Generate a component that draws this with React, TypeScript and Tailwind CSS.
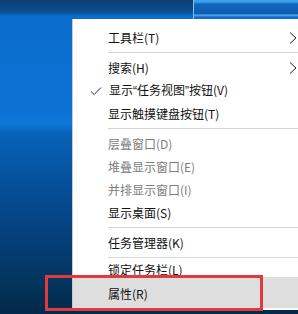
import React from 'react';

type Item =
  | { kind: 'sep' }
  | { kind: 'item'; label: React.ReactNode; disabled?: boolean; checked?: boolean; submenu?: boolean };

const q = (c: string) => <span className="font-['Liberation_Sans',sans-serif]">{c}</span>;

const items: Item[] = [
  { kind: 'item', label: '工具栏(T)', submenu: true },
  { kind: 'sep' },
  { kind: 'item', label: '搜索(H)', submenu: true },
  {
    kind: 'item',
    label: (
      <>
        显示{q('\u201C')}任务视图{q('\u201D')}按钮(V)
      </>
    ),
    checked: true,
  },
  { kind: 'item', label: '显示触摸键盘按钮(T)' },
  { kind: 'sep' },
  { kind: 'item', label: '层叠窗口(D)', disabled: true },
  { kind: 'item', label: '堆叠显示窗口(E)', disabled: true },
  { kind: 'item', label: '并排显示窗口(I)', disabled: true },
  { kind: 'item', label: '显示桌面(S)' },
  { kind: 'sep' },
  { kind: 'item', label: '任务管理器(K)' },
  { kind: 'sep' },
];

function Check() {
  return (
    <svg width="12" height="10" viewBox="0 0 12 10" className="ml-[17px] mr-[7px] shrink-0">
      <path d="M1 5.5 L4.2 8.5 L11 1.5" fill="none" stroke="#333" strokeWidth="1" />
    </svg>
  );
}

function Chevron() {
  return (
    <svg width="8" height="12" viewBox="0 0 8 12" className="ml-auto mr-[1px] shrink-0">
      <path d="M1 0.5 L7 6 L1 11.5" fill="none" stroke="#222" strokeWidth="1" />
    </svg>
  );
}

export default function App() {
  return (
    <div
      className="relative w-[298px] h-[314px] overflow-hidden bg-[linear-gradient(180deg,#0d3d70_0px,#0a4f92_12px,#0b6dcc_16px,#0b72d4_110px,#0d78d8_124px,#0863ba_132px,#06519c_180px,#05427f_230px,#04355f_280px,#03294a_314px)]"
      style={{ fontFamily: '"Noto Sans CJK SC", "Noto Sans", sans-serif' }}
    >
      {/* window edge at the top */}
      <div className="flex h-[19px]">
        <div className="w-[193px]" />
        <div className="flex-1 bg-[linear-gradient(180deg,#3aa0ec_0px,#3aa0ec_2px,#0f67bb_4px,#0c5cae_14px,#5fb4ee_15px,#0b6dcc_17px)] border-l border-[#7cc6f2]" />
      </div>

      <div className="flex">
        <div className="w-[72px] shrink-0" />
        <div className="flex-1 h-[291px] bg-white border-l border-[#c9c9c9] pt-[7px] text-[12px] leading-none text-[#111]">
          {items.map((it, i) =>
            it.kind === 'sep' ? (
              <div key={i} className="h-[7px] flex items-center pl-[35px]">
                <div className="h-px w-full bg-[#d5d5d5]" />
              </div>
            ) : (
              <div
                key={i}
                className={`h-[23px] flex items-center ${it.checked ? '' : 'pl-[35px]'} ${it.disabled ? 'text-[#7d7d7d]' : ''}`}
              >
                {it.checked && <Check />}
                <span>{it.label}</span>
                {it.submenu && <Chevron />}
              </div>
            )
          )}
          <div className="h-[16px] flex items-start pl-[35px] pt-[3px]">
            <span>锁定任务栏(L)</span>
          </div>
          <div className="h-[31px] flex items-center pl-[35px] pt-[3px] bg-[#dedede]">
            <span>属性(R)</span>
          </div>
        </div>
      </div>

      {/* red annotation box */}
      <div className="absolute left-[45px] top-[275px] w-[218px] h-[36px] border-[3px] border-[#e2393f]" />
    </div>
  );
}
